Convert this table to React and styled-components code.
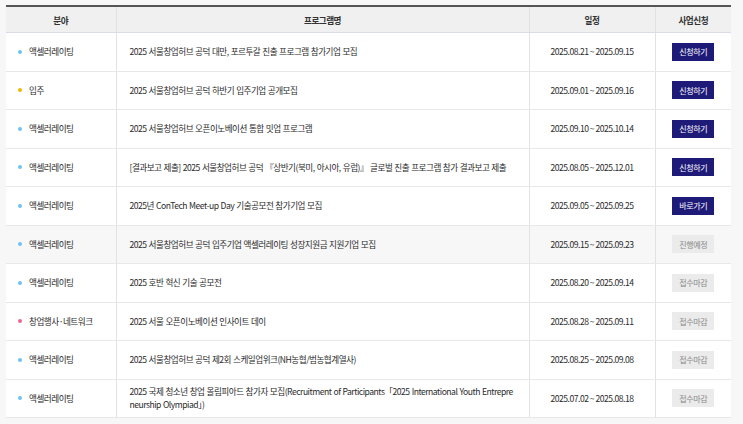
import React from "react";
import styled, { createGlobalStyle } from "styled-components";

const GlobalStyle = createGlobalStyle`
  html, body {
    margin: 0;
    padding: 0;
    background: #f7f7f7;
  }
  body {
    font-family: "Noto Sans CJK KR", "Noto Sans", sans-serif;
    color: #333;
  }
`;

const Page = styled.div`
  padding: 5px 12px 0 6px;
`;

const Table = styled.table`
  width: 725px;
  border-collapse: collapse;
  table-layout: fixed;
  background: #fff;
  border-top: 2px solid #555;
  font-size: 8.6px;
  letter-spacing: -0.5px;
`;

const HeadCell = styled.th`
  height: 25px;
  padding: 0;
  background: #f0f0f0;
  border-bottom: 1px solid #d9dce4;
  border-left: ${(p) => (p.$first ? "none" : "1px solid #e2e2e2")};
  font-weight: 700;
  color: #333;
  text-align: center;
  vertical-align: middle;
`;

const Row = styled.tr`
  background: ${(p) => (p.$shade ? "#f7f7f7" : "#fff")};
`;

const Cell = styled.td`
  height: 37.5px;
  padding: 0 ${(p) => (p.$pad ? p.$pad : "0")};
  border-bottom: 1px solid #e8e8e8;
  border-left: ${(p) => (p.$first ? "none" : "1px solid #e2e2e2")};
  text-align: ${(p) => p.$align || "center"};
  vertical-align: middle;
  color: #2b2b2b;
  line-height: 13px;
  word-break: break-all;
`;

const Title = styled(Cell)`
  word-spacing: 0.6px;
`;

const Category = styled.span`
  display: flex;
  align-items: center;
  gap: 7px;
  padding-left: 12px;
  &::before {
    content: "";
    width: 4px;
    height: 4px;
    border-radius: 50%;
    background: ${(p) => p.$dot};
  }
`;

const Button = styled.span`
  display: inline-flex;
  align-items: center;
  justify-content: center;
  width: 42px;
  height: 18px;
  font-size: 8px;
  letter-spacing: -0.4px;
  background: ${(p) => (p.$active ? "#1e1a78" : "#ebebeb")};
  color: ${(p) => (p.$active ? "#fff" : "#888")};
`;

const dots = {
  "액셀러레이팅": "#6ec3f2",
  "입주": "#f2b705",
  "창업행사·네트워크": "#f1648e",
};

const rows = [
  ["액셀러레이팅", "2025 서울창업허브 공덕 대만, 포르투갈 진출 프로그램 참가기업 모집", "2025.08.21 ~ 2025.09.15", "신청하기", true],
  ["입주", "2025 서울창업허브 공덕 하반기 입주기업 공개모집", "2025.09.01 ~ 2025.09.16", "신청하기", true],
  ["액셀러레이팅", "2025 서울창업허브 오픈이노베이션 통합 밋업 프로그램", "2025.09.10 ~ 2025.10.14", "신청하기", true],
  ["액셀러레이팅", "[결과보고 제출] 2025 서울창업허브 공덕 『상반기(북미, 아시아, 유럽)』 글로벌 진출 프로그램 참가 결과보고 제출", "2025.08.05 ~ 2025.12.01", "신청하기", true],
  ["액셀러레이팅", "2025년 ConTech Meet-up Day 기술공모전 참가기업 모집", "2025.09.05 ~ 2025.09.25", "바로가기", true],
  ["액셀러레이팅", "2025 서울창업허브 공덕 입주기업 액셀러레이팅 성장지원금 지원기업 모집", "2025.09.15 ~ 2025.09.23", "진행예정", false, true],
  ["액셀러레이팅", "2025 호반 혁신 기술 공모전", "2025.08.20 ~ 2025.09.14", "접수마감", false],
  ["창업행사·네트워크", "2025 서울 오픈이노베이션 인사이트 데이", "2025.08.28 ~ 2025.09.11", "접수마감", false],
  ["액셀러레이팅", "2025 서울창업허브 공덕 제2회 스케일업위크(NH농협/범농협계열사)", "2025.08.25 ~ 2025.09.08", "접수마감", false],
  ["액셀러레이팅", "2025 국제 청소년 창업 올림피아드 참가자 모집(Recruitment of Participants「2025 International Youth Entrepreneurship Olympiad」)", "2025.07.02 ~ 2025.08.18", "접수마감", false],
];

export default function App() {
  return (
    <Page>
      <GlobalStyle />
      <Table>
        <colgroup>
          <col style={{ width: 110 }} />
          <col style={{ width: 413 }} />
          <col style={{ width: 126 }} />
          <col style={{ width: 76 }} />
        </colgroup>
        <thead>
          <tr>
            <HeadCell $first>분야</HeadCell>
            <HeadCell>프로그램명</HeadCell>
            <HeadCell>일정</HeadCell>
            <HeadCell>사업신청</HeadCell>
          </tr>
        </thead>
        <tbody>
          {rows.map(([cat, title, date, label, active, shade], i) => (
            <Row key={i} $shade={shade}>
              <Cell $first $align="left">
                <Category $dot={dots[cat]}>{cat}</Category>
              </Cell>
              <Title $align="left" $pad="13px">{title}</Title>
              <Cell>{date}</Cell>
              <Cell>
                <Button $active={active}>{label}</Button>
              </Cell>
            </Row>
          ))}
        </tbody>
      </Table>
    </Page>
  );
}
